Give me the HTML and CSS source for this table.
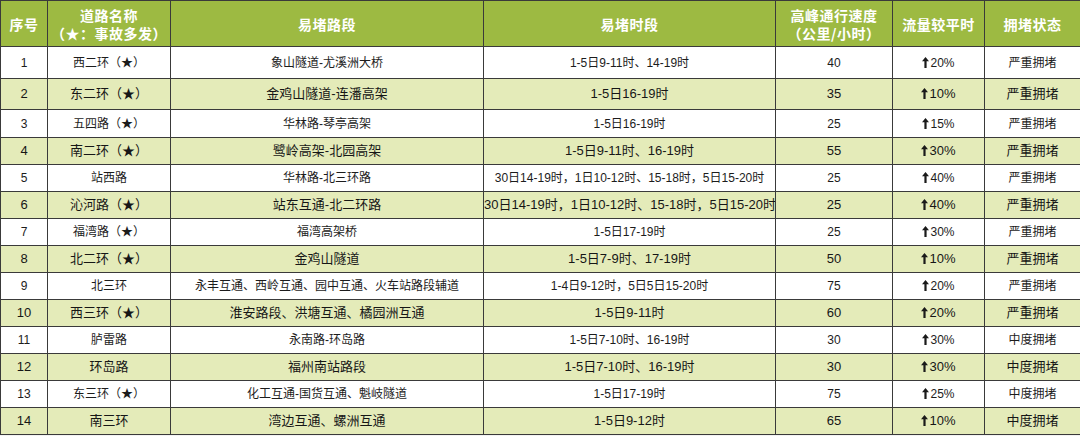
FILE: index.html
```html
<!DOCTYPE html>
<html lang="zh-CN">
<head>
<meta charset="utf-8">
<title>易堵路段</title>
<link rel="stylesheet" href="styles.css">
</head>
<body>
<svg class="defs" width="0" height="0" aria-hidden="true">
  <defs>
    <symbol id="arrow-up" viewBox="0 0 7 11">
      <path d="M3.5 0 L7 4.2 L4.6 4.2 L4.6 11 L2.4 11 L2.4 4.2 L0 4.2 Z" fill="#1a1a1a"/>
    </symbol>
  </defs>
</svg>
<table class="jam">
  <colgroup>
    <col class="c-no"><col class="c-name"><col class="c-seg"><col class="c-time"><col class="c-speed"><col class="c-flow"><col class="c-state">
  </colgroup>
  <thead>
    <tr>
      <th>序号</th>
      <th>道路名称<br>（★：事故多发）</th>
      <th>易堵路段</th>
      <th>易堵时段</th>
      <th>高峰通行速度<br>（公里/小时）</th>
      <th>流量较平时</th>
      <th>拥堵状态</th>
    </tr>
  </thead>
  <tbody>
    <tr class="r1"><td>1</td><td>西二环（★）</td><td>象山隧道-尤溪洲大桥</td><td>1-5日9-11时、14-19时</td><td>40</td><td><svg class="up"><use href="#arrow-up"/></svg>20%</td><td>严重拥堵</td></tr>
    <tr class="alt r2"><td>2</td><td>东二环（★）</td><td>金鸡山隧道-连潘高架</td><td>1-5日16-19时</td><td>35</td><td><svg class="up"><use href="#arrow-up"/></svg>10%</td><td>严重拥堵</td></tr>
    <tr class="r3"><td>3</td><td>五四路（★）</td><td>华林路-琴亭高架</td><td>1-5日16-19时</td><td>25</td><td><svg class="up"><use href="#arrow-up"/></svg>15%</td><td>严重拥堵</td></tr>
    <tr class="alt"><td>4</td><td>南二环（★）</td><td>鹭岭高架-北园高架</td><td>1-5日9-11时、16-19时</td><td>55</td><td><svg class="up"><use href="#arrow-up"/></svg>30%</td><td>严重拥堵</td></tr>
    <tr><td>5</td><td>站西路</td><td>华林路-北三环路</td><td>30日14-19时，1日10-12时、15-18时，5日15-20时</td><td>25</td><td><svg class="up"><use href="#arrow-up"/></svg>40%</td><td>严重拥堵</td></tr>
    <tr class="alt"><td>6</td><td>沁河路（★）</td><td>站东互通-北二环路</td><td>30日14-19时，1日10-12时、15-18时，5日15-20时</td><td>25</td><td><svg class="up"><use href="#arrow-up"/></svg>40%</td><td>严重拥堵</td></tr>
    <tr><td>7</td><td>福湾路（★）</td><td>福湾高架桥</td><td>1-5日17-19时</td><td>25</td><td><svg class="up"><use href="#arrow-up"/></svg>30%</td><td>严重拥堵</td></tr>
    <tr class="alt"><td>8</td><td>北二环（★）</td><td>金鸡山隧道</td><td>1-5日7-9时、17-19时</td><td>50</td><td><svg class="up"><use href="#arrow-up"/></svg>10%</td><td>严重拥堵</td></tr>
    <tr><td>9</td><td>北三环</td><td>永丰互通、西岭互通、园中互通、火车站路段辅道</td><td>1-4日9-12时，5日5日15-20时</td><td>75</td><td><svg class="up"><use href="#arrow-up"/></svg>20%</td><td>严重拥堵</td></tr>
    <tr class="alt"><td>10</td><td>西三环（★）</td><td>淮安路段、洪塘互通、橘园洲互通</td><td>1-5日9-11时</td><td>60</td><td><svg class="up"><use href="#arrow-up"/></svg>20%</td><td>严重拥堵</td></tr>
    <tr><td>11</td><td>胪雷路</td><td>永南路-环岛路</td><td>1-5日7-10时、16-19时</td><td>30</td><td><svg class="up"><use href="#arrow-up"/></svg>30%</td><td>中度拥堵</td></tr>
    <tr class="alt"><td>12</td><td>环岛路</td><td>福州南站路段</td><td>1-5日7-10时、16-19时</td><td>30</td><td><svg class="up"><use href="#arrow-up"/></svg>30%</td><td>中度拥堵</td></tr>
    <tr><td>13</td><td>东三环（★）</td><td>化工互通-国货互通、魁岐隧道</td><td>1-5日17-19时</td><td>75</td><td><svg class="up"><use href="#arrow-up"/></svg>25%</td><td>中度拥堵</td></tr>
    <tr class="alt"><td>14</td><td>南三环</td><td>湾边互通、螺洲互通</td><td>1-5日9-12时</td><td>65</td><td><svg class="up"><use href="#arrow-up"/></svg>10%</td><td>中度拥堵</td></tr>
  </tbody>
</table>
</body>
</html>
```

FILE: styles.css
```css
html, body {
  margin: 0;
  padding: 0;
  background: #f2f2f2;
}

.defs {
  position: absolute;
  width: 0;
  height: 0;
  overflow: hidden;
}

.jam {
  width: 1080px;
  table-layout: fixed;
  border-collapse: collapse;
  font-family: "Liberation Sans", "Noto Sans CJK SC", sans-serif;
  color: #1c1c1c;
  background: #ffffff;
}

.c-no { width: 47px; }
.c-name { width: 123px; }
.c-seg { width: 313px; }
.c-time { width: 292px; }
.c-speed { width: 117px; }
.c-flow { width: 92px; }
.c-state { width: 96px; }

.jam th,
.jam td {
  border: 1px solid #3a3a3a;
  text-align: center;
  vertical-align: middle;
  padding: 0;
  white-space: nowrap;
  overflow: hidden;
}

.jam thead tr {
  height: 46px;
}

.jam th {
  background: #9dba42;
  color: #ffffff;
  font-family: "Noto Sans CJK SC", sans-serif;
  font-weight: bold;
  font-size: 14px;
  line-height: 18px;
  letter-spacing: 0.5px;
}

.jam tbody tr {
  height: 27px;
}

.jam tbody tr.r1 { height: 32px; }
.jam tbody tr.r2 { height: 31px; }
.jam tbody tr.r3 { height: 28px; }

.jam td {
  font-size: 12px;
  line-height: 14px;
}

.jam tr.alt td {
  background: #e4ebb9;
  font-size: 13px;
  color: #161616;
}

.up {
  display: inline-block;
  width: 7px;
  height: 11px;
  margin-right: 1px;
  vertical-align: -1px;
}
```
